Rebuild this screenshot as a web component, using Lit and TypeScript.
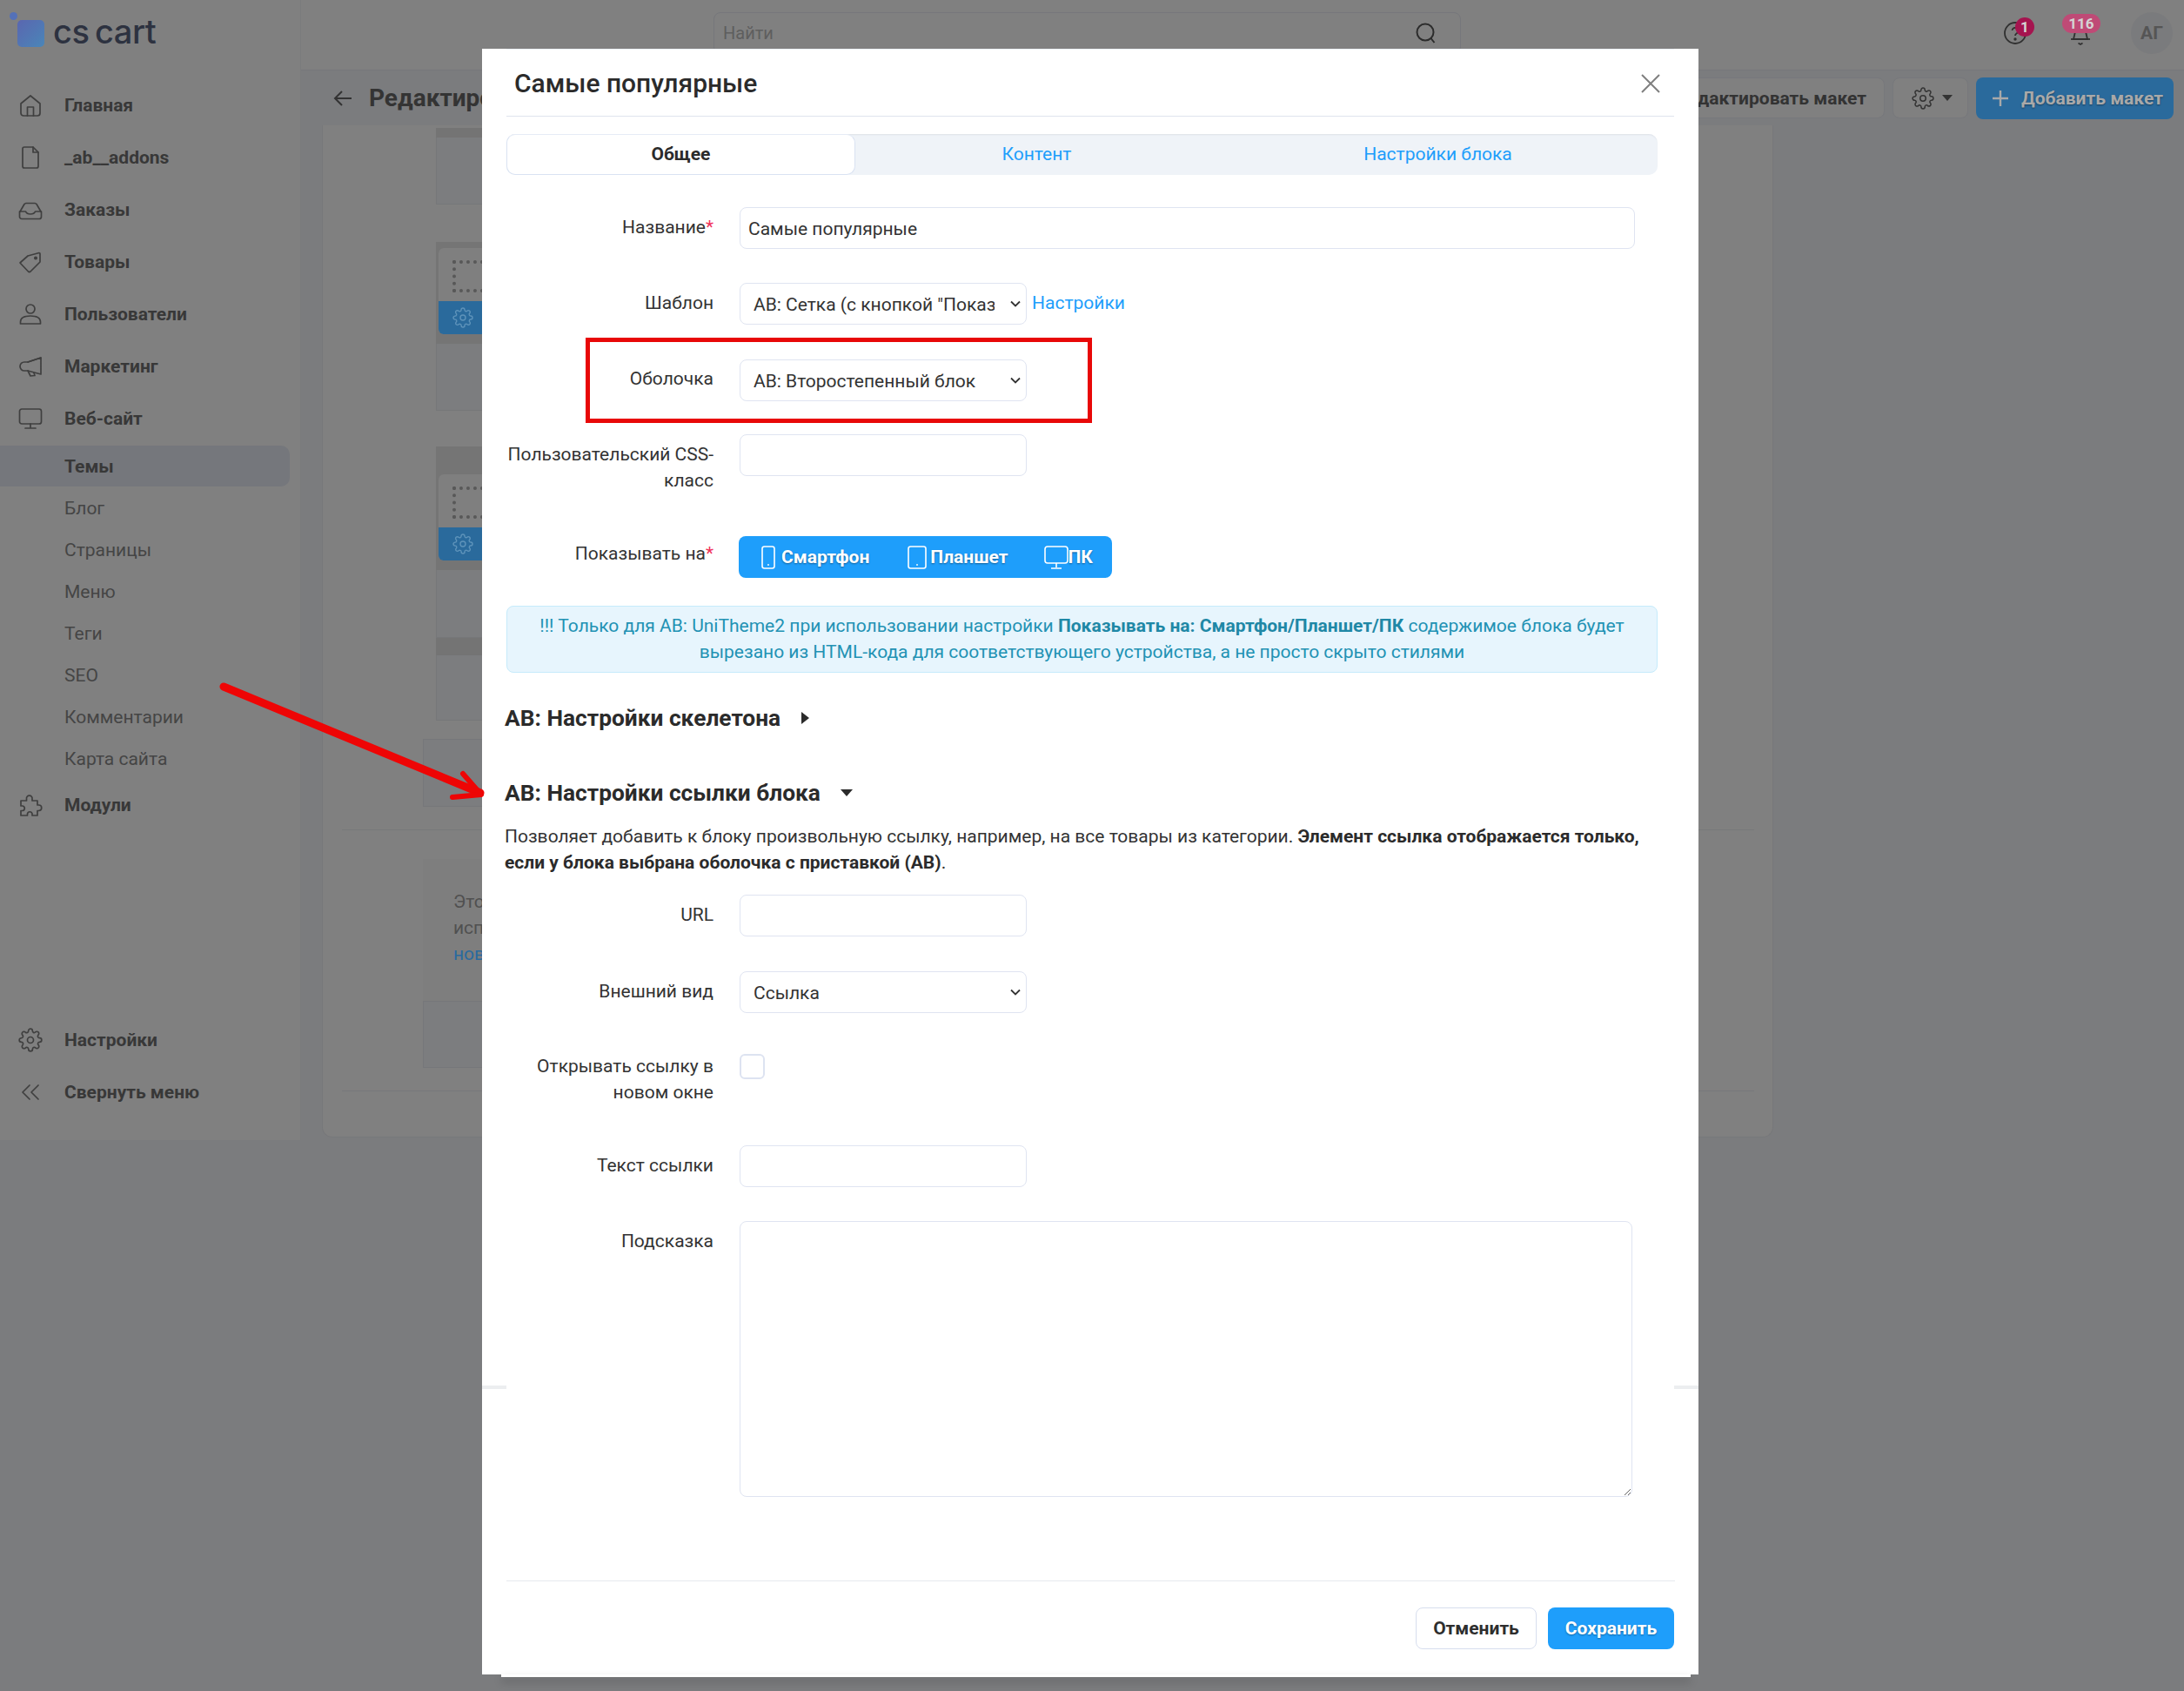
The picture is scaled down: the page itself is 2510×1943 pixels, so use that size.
import { LitElement, html, css, svg } from 'lit';
import { customElement } from 'lit/decorators.js';

const GEAR = svg`<circle cx="12" cy="12" r="3"></circle><path d="M19.4 15a1.65 1.65 0 0 0 .33 1.82l.06.06a2 2 0 0 1 0 2.83 2 2 0 0 1-2.83 0l-.06-.06a1.65 1.65 0 0 0-1.82-.33 1.65 1.65 0 0 0-1 1.51V21a2 2 0 0 1-2 2 2 2 0 0 1-2-2v-.09A1.65 1.65 0 0 0 9 19.4a1.65 1.65 0 0 0-1.82.33l-.06.06a2 2 0 0 1-2.83 0 2 2 0 0 1 0-2.83l.06-.06a1.65 1.65 0 0 0 .33-1.82 1.65 1.65 0 0 0-1.51-1H3a2 2 0 0 1-2-2 2 2 0 0 1 2-2h.09A1.65 1.65 0 0 0 4.6 9a1.65 1.65 0 0 0-.33-1.82l-.06-.06a2 2 0 0 1 0-2.83 2 2 0 0 1 2.83 0l.06.06a1.65 1.65 0 0 0 1.82.33H9a1.65 1.65 0 0 0 1-1.51V3a2 2 0 0 1 2-2 2 2 0 0 1 2 2v.09a1.65 1.65 0 0 0 1 1.51 1.65 1.65 0 0 0 1.82-.33l.06-.06a2 2 0 0 1 2.83 0 2 2 0 0 1 0 2.83l-.06.06a1.65 1.65 0 0 0-.33 1.82V9a1.65 1.65 0 0 0 1.51 1H21a2 2 0 0 1 2 2 2 2 0 0 1-2 2h-.09a1.65 1.65 0 0 0-1.51 1z"></path>`;

const gearIcon = (cls: string) =>
  html`<svg class=${cls} viewBox="0 0 24 24" fill="none" stroke="currentColor" stroke-width="1.4">${GEAR}</svg>`;

const navIcon = (d: unknown) =>
  html`<svg class="nav-icon" viewBox="0 0 28 28" fill="none" stroke="currentColor" stroke-width="1.7" stroke-linejoin="round" stroke-linecap="round">${d}</svg>`;

const ICONS = {
  home: svg`<path d="M3 12 14 3l11 9v11a3 3 0 0 1-3 3H6a3 3 0 0 1-3-3Z"></path><path d="M10.5 26V16h7v10"></path>`,
  file: svg`<path d="M7 2h10l6 6v16a2 2 0 0 1-2 2H7a2 2 0 0 1-2-2V4a2 2 0 0 1 2-2Z"></path><path d="M17 2v6h6"></path>`,
  inbox: svg`<path d="M1.5 17 7 7.500a3 3 0 0 1 2-1h10a3 3 0 0 1 2 1L26.500 17v5a2.500 2.500 0 0 1-2.500 2.500H4A2.500 2.500 0 0 1 1.500 22Z"></path><path d="M1.500 16h7c1.500 4 9.500 4 11 0h7"></path>`,
  tag: svg`<path d="M2 15 11 7l13-3.500a1 1 0 0 1 1 1V14L14 25a2 2 0 0 1-2.500 0Z"></path><circle cx="20" cy="9.500" r="1.200" fill="currentColor"></circle>`,
  user: svg`<circle cx="14" cy="8" r="5"></circle><path d="M2.500 25v-2c0-5 5.500-7 11.500-7s11.500 2 11.500 7v2Z"></path>`,
  mega: svg`<path d="M26 4v19L11 19H7a5 5 0 0 1 0-10h4Z"></path><path d="M11 19l3 6 5-.5-1-3"></path><path d="M26 4 11 9"></path>`,
  monitor: svg`<rect x="1.500" y="3" width="25" height="17" rx="2.500"></rect><path d="M14 20v4M8 25h12"></path>`,
  puzzle: svg`<path d="M3 9h6.500V7a3.300 3.300 0 1 1 6.500 0v2h6v5h1.500a3.200 3.200 0 1 1 0 6.500H22V26h-6v-2a2.800 2.800 0 0 0-5.500 0v2H3v-5.500h2a2.800 2.800 0 0 0 0-5.500H3Z"></path>`,
  gear: svg`<g transform="scale(1.1667)" stroke-width="1.450">${GEAR}</g>`,
  collapse: svg`<path d="M13 6 5 14l8 8M23 6l-8 8 8 8"></path>`,
};

const phone = html`<svg class="dev" viewBox="0 0 16 27" fill="none" stroke="currentColor" stroke-width="1.600"><rect x="1" y="1" width="14" height="25" rx="2.500"></rect><circle cx="8" cy="22" r="0.900" fill="currentColor" stroke="none"></circle></svg>`;
const tablet = html`<svg class="dev tablet" viewBox="0 0 22 27" fill="none" stroke="currentColor" stroke-width="1.600"><rect x="1" y="1" width="20" height="25" rx="2.500"></rect><circle cx="11" cy="22" r="0.900" fill="currentColor" stroke="none"></circle></svg>`;
const desktop = html`<svg class="dev desk" viewBox="0 0 28 27" fill="none" stroke="currentColor" stroke-width="1.600"><rect x="1" y="1" width="26" height="19" rx="3"></rect><path d="M14 20v5M8 26h12"></path></svg>`;

const NAV_TOP = [
  ['Главная', ICONS.home],
  ['_ab__addons', ICONS.file],
  ['Заказы', ICONS.inbox],
  ['Товары', ICONS.tag],
  ['Пользователи', ICONS.user],
  ['Маркетинг', ICONS.mega],
  ['Веб-сайт', ICONS.monitor],
] as const;

const NAV_SUB = ['Блог', 'Страницы', 'Меню', 'Теги', 'SEO', 'Комментарии', 'Карта сайта'];

const selectBox = (value: string) => html`
  <span class="sel">
    <select><option>${value}</option></select>
    <svg viewBox="0 0 12 8" fill="none" stroke="currentColor" stroke-width="1.800"><path d="M1 1.500 6 6.500 11 1.500"></path></svg>
  </span>
`;

@customElement('app-root')
export class AppRoot extends LitElement {
  static override styles = css`
    :host {
      display: block;
      width: 2510px;
      height: 1943px;
      font: 21px/30px Roboto, 'Liberation Sans', sans-serif;
    }
    * {
      box-sizing: border-box;
    }
    .page {
      position: relative;
      display: flex;
      width: 2510px;
      height: 1943px;
      overflow: hidden;
      background: #7b7c7e;
      color: #3a3a3a;
    }

    /* sidebar */
    .sidebar {
      display: flex;
      flex-direction: column;
      flex: none;
      width: 346px;
      height: 1310px;
      padding-bottom: 25px;
      background: #808080;
      border-right: 1px solid #7a7b7d;
    }
    .logo {
      display: flex;
      align-items: flex-start;
      height: 91px;
      padding: 14px 0 0 11px;
    }
    .logo-mark {
      position: relative;
      flex: none;
      width: 40px;
      height: 40px;
    }
    .logo-dot {
      position: absolute;
      left: 0;
      top: 0;
      width: 9px;
      height: 9px;
      border-radius: 50%;
      background: #5471b8;
    }
    .logo-square {
      position: absolute;
      left: 9px;
      top: 9px;
      width: 31px;
      height: 31px;
      border-radius: 5px;
      background: linear-gradient(135deg, #5a66b0, #4a86b8);
    }
    .logo-text {
      margin-left: 10px;
      font: 500 38px/44px Inter, Roboto, sans-serif;
      letter-spacing: -0.5px;
      color: #2d3240;
      word-spacing: -3px;
    }
    .nav-item {
      display: flex;
      align-items: center;
      height: 60px;
      padding-left: 21px;
      font-weight: 700;
      color: #383838;
    }
    .nav-icon {
      flex: none;
      width: 28px;
      height: 28px;
      margin-right: 25px;
      color: #3f3f3f;
    }
    .nav-sub {
      display: flex;
      align-items: center;
      height: 48px;
      padding: 1px 0 0 74px;
      color: #454545;
    }
    .nav-sub.current {
      width: 333px;
      height: 47px;
      margin: 1px 0 0;
      padding-top: 0;
      border-radius: 0 10px 10px 0;
      background: #75777c;
      font-weight: 700;
      color: #383838;
    }
    .nav-bottom {
      margin-top: auto;
    }

    /* main behind the dialog */
    .main {
      flex: 1;
      min-width: 0;
    }
    .topbar {
      display: flex;
      align-items: center;
      height: 81px;
      padding: 0 13px 5px 474px;
      background: #808080;
      border-bottom: 1px solid #76777b;
    }
    .search {
      display: flex;
      align-items: center;
      justify-content: space-between;
      width: 859px;
      height: 48px;
      padding: 0 26px 0 10px;
      border: 1px solid #76777b;
      border-radius: 8px;
      font-size: 20px;
      color: #5e5e5e;
    }
    .search svg {
      width: 26px;
      height: 26px;
      color: #2c2c2c;
    }
    .top-icon {
      position: relative;
      flex: none;
      width: 28px;
      height: 28px;
      color: #303030;
    }
    .top-icon svg {
      display: block;
      width: 28px;
      height: 28px;
    }
    .help {
      margin-left: auto;
    }
    .bell {
      margin-left: 47px;
      margin-top: 16px;
    }
    .badge {
      position: absolute;
      display: flex;
      align-items: center;
      justify-content: center;
      height: 22px;
      border-radius: 11px;
      font-size: 17px;
      font-weight: 700;
      line-height: 22px;
      color: #d4d4d4;
    }
    .badge.one {
      left: 14px;
      top: -4px;
      width: 22px;
      background: #a5144f;
    }
    .badge.many {
      left: -7px;
      top: -16px;
      width: 44px;
      background: #bf4a76;
    }
    .avatar {
      display: flex;
      align-items: center;
      justify-content: center;
      flex: none;
      width: 48px;
      height: 48px;
      margin-left: 44px;
      border-radius: 50%;
      background: #7a7b7d;
      font-weight: 700;
      color: #555;
    }
    .toolbar {
      display: flex;
      align-items: center;
      height: 63px;
      padding: 0 12px 0 37px;
    }
    .back {
      flex: none;
      width: 22px;
      height: 22px;
      margin-right: 19px;
      color: #333;
    }
    .page-title {
      width: 130px;
      overflow: hidden;
      white-space: nowrap;
      font-size: 28px;
      font-weight: 700;
      color: #343434;
    }
    .tool-btn {
      display: flex;
      align-items: center;
      height: 47px;
      border: 1px solid #77787c;
      border-radius: 8px;
      background: #808080;
      font-weight: 700;
      color: #333;
    }
    .edit {
      margin-left: auto;
      padding: 0 20px;
    }
    .gear-btn {
      width: 87px;
      margin-left: 9px;
      padding-left: 21px;
    }
    .gear-btn svg {
      width: 26px;
      height: 26px;
    }
    .gear-btn i {
      margin-left: 9px;
      border: 6px solid transparent;
      border-top: 7px solid #333;
      border-bottom: 0;
    }
    .add {
      width: 227px;
      height: 48px;
      margin-left: 9px;
      padding-left: 18px;
      border: 0;
      background: #2a6a9c;
      color: #a9a9a9;
      text-shadow: 0 1px 2px rgba(0, 0, 0, 0.4);
    }
    .add svg {
      width: 20px;
      height: 20px;
      margin-right: 14px;
    }
    .card {
      width: 1668px;
      height: 1163px;
      margin-left: 24px;
      border: 1px solid #77787a;
      border-top: 0;
      border-radius: 0 0 12px 12px;
      background: #808080;
      overflow: hidden;
    }
    .grid {
      width: 1400px;
      margin: 3px 0 0 130px;
    }
    .strip {
      background: #747474;
    }
    .cell {
      border-left: 1px solid #767779;
      border-bottom: 1px solid #767779;
      background: #7c7d7f;
    }
    .band {
      padding-left: 3px;
      background: #757575;
    }
    .widget {
      width: 300px;
      height: 99px;
      border-radius: 6px;
      background: #7f7f7f;
      overflow: hidden;
    }
    .widget-body {
      height: 61px;
      padding: 14px 0 0 16px;
    }
    .dots {
      height: 37px;
      border: 4px dotted #585858;
    }
    .widget-foot {
      display: flex;
      align-items: center;
      height: 38px;
      padding-left: 16px;
      background: #2a6a9c;
      color: #5e93ba;
    }
    .widget-foot svg {
      width: 24px;
      height: 24px;
    }
    .box {
      width: 1400px;
      margin-left: 115px;
      border: 1px solid #76777a;
      background: #7c7d7f;
    }
    .rule {
      width: 1623px;
      margin-left: 22px;
      height: 1px;
      background: #77787a;
    }
    .info {
      width: 1400px;
      margin-left: 115px;
      height: 163px;
      padding: 34px 0 0 35px;
      background: #7e7e7e;
      color: #505050;
      white-space: nowrap;
    }
    .info a {
      color: #296a9f;
    }

    /* dialog */
    .modal {
      position: absolute;
      left: 554px;
      top: 56px;
      width: 1398px;
      height: 1868px;
      padding: 0 28px;
      background: #fff;
      color: #333;
    }
    .modal::after {
      content: '';
      position: absolute;
      left: 22px;
      right: 9px;
      bottom: -3px;
      height: 3px;
      background: #fff;
      box-shadow: 0 5px 10px rgba(0, 0, 0, 0.3);
    }
    .slider-mark {
      position: absolute;
      top: 1536px;
      width: 28px;
      height: 4px;
      background: #eceef0;
    }
    .slider-mark.l {
      left: 0;
    }
    .slider-mark.r {
      right: 0;
    }
    .modal-head {
      display: flex;
      align-items: center;
      justify-content: space-between;
      height: 78px;
      padding: 2px 15px 0 9px;
      border-top: 1px solid #eef2f9;
      border-bottom: 1px solid #dfe4ee;
    }
    .modal-title {
      font-size: 30px;
      font-weight: 500;
      line-height: 36px;
      color: #2b2b2b;
    }
    .close {
      width: 24px;
      height: 24px;
      color: #7f7f7f;
    }
    .tabs {
      display: grid;
      grid-template-columns: 401px 417px 505px;
      width: 1323px;
      height: 47px;
      margin: 20px 0 37px;
      border-radius: 10px;
      background: #eff3f8;
      box-shadow: inset 0 2px 2px -1px #dde1e7;
    }
    .tab {
      display: flex;
      align-items: center;
      justify-content: center;
      padding-bottom: 2px;
      color: #1e9efb;
    }
    .tab.active {
      border: 1px solid #d9e2f2;
      border-top-color: #e6ecf6;
      border-radius: 10px;
      background: #fff;
      font-weight: 700;
      color: #2b2b2b;
    }
    .row {
      display: flex;
      align-items: flex-start;
    }
    .label {
      flex: none;
      width: 238px;
      margin-right: 30px;
      padding-top: 8px;
      text-align: right;
      color: #333;
    }
    .label.up1 {
      padding-top: 7px;
    }
    .label.up3 {
      padding-top: 5px;
    }
    .label b {
      font-weight: 400;
      color: #f0325a;
    }
    .mb38 { margin-bottom: 38px; }
    .mb39 { margin-bottom: 39px; }
    .mb40 { margin-bottom: 40px; }
    .mb46 { margin-bottom: 46px; }
    .mb49 { margin-bottom: 49px; }
    input,
    select,
    textarea {
      height: 48px;
      margin: 0;
      border: 1px solid #dfe4f1;
      border-radius: 8px;
      background: #fff;
      font: 21px/30px Roboto, 'Liberation Sans', sans-serif;
      color: #333;
      outline: 0;
    }
    input {
      padding: 2px 9px 0;
    }
    .wide {
      width: 1029px;
    }
    .narrow {
      width: 330px;
    }
    .sel {
      position: relative;
      display: block;
      flex: none;
      width: 330px;
      height: 48px;
      color: #333;
    }
    .sel select {
      appearance: none;
      display: block;
      width: 330px;
      padding: 2px 36px 0 15px;
    }
    .sel svg {
      position: absolute;
      right: 7px;
      top: 20px;
      width: 12px;
      height: 8px;
      pointer-events: none;
    }
    .link {
      margin-left: 6px;
      padding-top: 8px;
      color: #1e9efb;
    }
    .devices {
      display: flex;
      align-items: center;
      width: 429px;
      height: 48px;
      margin-left: -1px;
      padding-left: 26px;
      border-radius: 8px;
      background: #1e9efb;
      font-weight: 700;
      color: #fff;
      text-shadow: 0 1px 2px rgba(0, 0, 0, 0.4);
    }
    .dev {
      flex: none;
      width: 16px;
      height: 27px;
      margin-right: 7px;
    }
    .dev.tablet {
      width: 22px;
      margin-left: 44px;
      margin-right: 4px;
    }
    .dev.desk {
      width: 28px;
      margin-left: 41px;
      margin-right: 0;
    }
    .alert {
      width: 1323px;
      height: 77px;
      margin-top: 32px;
      padding-top: 7px;
      border: 1px solid #c6ebfb;
      border-radius: 8px;
      background: #e7f5fd;
      text-align: center;
      color: #2292b4;
    }
    .alert b {
      font-weight: 700;
      color: #1f88a6;
    }
    .section {
      display: flex;
      align-items: center;
      height: 36px;
      margin-left: -2px;
      font-size: 26.300px;
      font-weight: 700;
      color: #2b2b2b;
    }
    .caret-right {
      margin-left: 24px;
      border: 7px solid transparent;
      border-left: 9px solid #2b2b2b;
      border-right: 0;
    }
    .caret-down {
      margin-left: 23px;
      border: 7px solid transparent;
      border-top: 8px solid #2b2b2b;
      border-bottom: 0;
    }
    .s1 {
      margin-top: 34px;
    }
    .s2 {
      margin-top: 50px;
    }
    .text {
      margin: 18px 0 22px -2px;
      line-height: 29.500px;
      color: #333;
    }
    .text b {
      font-weight: 700;
      color: #2b2b2b;
    }
    .check {
      flex: none;
      width: 29px;
      height: 29px;
      margin-top: 9px;
      border: 2px solid #dde3f1;
      border-radius: 6px;
    }
    textarea {
      display: block;
      width: 1026px;
      height: 317px;
    }
    .foot-rule {
      height: 1px;
      margin-top: 96px;
      background: #e6e9ef;
      width: 1343px;
    }
    .actions {
      display: flex;
      justify-content: flex-end;
      gap: 13px;
      width: 1342px;
      margin-top: 30px;
    }
    .btn {
      display: flex;
      align-items: center;
      justify-content: center;
      height: 48px;
      border-radius: 8px;
      font-weight: 700;
    }
    .btn.cancel {
      width: 139px;
      border: 1px solid #d7deee;
      color: #2e2e2e;
    }
    .btn.save {
      width: 145px;
      background: #1e9efb;
      color: #fff;
      text-shadow: 0 1px 2px rgba(0, 0, 0, 0.35);
    }

    /* annotations */
    .red-box {
      position: absolute;
      left: 673px;
      top: 388px;
      width: 582px;
      height: 98px;
      border: 5px solid #e80808;
    }
    .arrow {
      position: absolute;
      left: 0;
      top: 0;
      width: 2510px;
      height: 1943px;
      pointer-events: none;
    }
  `;

  private renderSidebar() {
    return html`
      <aside class="sidebar">
        <div class="logo">
          <div class="logo-mark"><span class="logo-dot"></span><span class="logo-square"></span></div>
          <span class="logo-text">cs cart</span>
        </div>
        ${NAV_TOP.map(([label, icon]) => html`<div class="nav-item">${navIcon(icon)}${label}</div>`)}
        <div class="nav-sub current">Темы</div>
        ${NAV_SUB.map((label) => html`<div class="nav-sub">${label}</div>`)}
        <div class="nav-item">${navIcon(ICONS.puzzle)}Модули</div>
        <div class="nav-item nav-bottom">${navIcon(ICONS.gear)}Настройки</div>
        <div class="nav-item">${navIcon(ICONS.collapse)}Свернуть меню</div>
      </aside>
    `;
  }

  private renderWidget() {
    return html`
      <div class="widget">
        <div class="widget-body"><div class="dots"></div></div>
        <div class="widget-foot">${gearIcon('')}</div>
      </div>
    `;
  }

  private renderMain() {
    return html`
      <div class="main">
        <div class="topbar">
          <div class="search">
            <span>Найти</span>
            <svg viewBox="0 0 26 26" fill="none" stroke="currentColor" stroke-width="2"><circle cx="12" cy="12" r="9.500"></circle><path d="M18.500 19l4 5"></path></svg>
          </div>
          <div class="top-icon help">
            <svg viewBox="0 0 28 28" fill="none" stroke="currentColor" stroke-width="1.800"><circle cx="14" cy="14" r="12"></circle><path d="M10.500 11a3.500 3.500 0 1 1 5 3.500c-1 .6-1.500 1.200-1.500 2.500"></path><circle cx="14" cy="21" r="0.800" fill="currentColor"></circle></svg>
            <span class="badge one">1</span>
          </div>
          <div class="top-icon bell">
            <svg viewBox="0 0 28 28" fill="none" stroke="currentColor" stroke-width="1.800"><path d="M9 0 6 13h16L19 0"></path><path d="M3 13h22"></path><path d="M11.500 17.500 14 19l2.500-1.500"></path></svg>
            <span class="badge many">116</span>
          </div>
          <div class="avatar">АГ</div>
        </div>
        <div class="toolbar">
          <svg class="back" viewBox="0 0 22 22" fill="none" stroke="currentColor" stroke-width="2"><path d="M21 11H2M10 3l-8 8 8 8"></path></svg>
          <span class="page-title">Редактирование макета</span>
          <div class="tool-btn edit">Редактировать макет</div>
          <div class="tool-btn gear-btn">${gearIcon('')}<i></i></div>
          <div class="tool-btn add">
            <svg viewBox="0 0 20 20" fill="none" stroke="currentColor" stroke-width="2.400"><path d="M10 1v18M1 10h18"></path></svg>
            Добавить макет
          </div>
        </div>
        <div class="card">
          <div class="grid">
            <div class="strip" style="height:11px"></div>
            <div class="cell" style="height:77px"></div>
            <div style="height:43px"></div>
            <div class="band" style="height:117px;padding-top:7px">${this.renderWidget()}</div>
            <div class="cell" style="height:77px"></div>
            <div style="height:41px"></div>
            <div class="band" style="height:142px;padding-top:32px">${this.renderWidget()}</div>
            <div class="cell" style="height:78px"></div>
            <div class="strip" style="height:20px"></div>
            <div class="cell" style="height:75px"></div>
          </div>
          <div class="box" style="height:78px;margin-top:21px"></div>
          <div class="rule" style="margin-top:26px"></div>
          <div class="info" style="margin-top:33px">Это<br />исп<br /><a>нов</a></div>
          <div class="box" style="height:77px"></div>
          <div class="rule" style="margin-top:26px"></div>
        </div>
      </div>
    `;
  }

  private renderModal() {
    return html`
      <section class="modal">
        <span class="slider-mark l"></span>
        <span class="slider-mark r"></span>
        <header class="modal-head">
          <span class="modal-title">Самые популярные</span>
          <svg class="close" viewBox="0 0 24 24" fill="none" stroke="currentColor" stroke-width="2"><path d="M2 2l20 20M22 2 2 22"></path></svg>
        </header>
        <div class="tabs">
          <div class="tab active">Общее</div>
          <div class="tab">Контент</div>
          <div class="tab">Настройки блока</div>
        </div>

        <div class="row mb39">
          <div class="label">Название<b>*</b></div>
          <input class="wide" .value=${'Самые популярные'} />
        </div>
        <div class="row mb40">
          <div class="label">Шаблон</div>
          ${selectBox('AB: Сетка (с кнопкой "Показать ещё")')}
          <span class="link">Настройки</span>
        </div>
        <div class="row mb38">
          <div class="label up1">Оболочка</div>
          ${selectBox('AB: Второстепенный блок')}
        </div>
        <div class="row mb49">
          <div class="label">Пользовательский CSS-класс</div>
          <input class="narrow" />
        </div>
        <div class="row">
          <div class="label up3">Показывать на<b>*</b></div>
          <div class="devices">
            ${phone}<span>Смартфон</span>${tablet}<span>Планшет</span>${desktop}<span>ПК</span>
          </div>
        </div>
        <div class="alert">
          !!! Только для AB: UniTheme2 при использовании настройки <b>Показывать на: Смартфон/Планшет/ПК</b> содержимое блока будет<br />
          вырезано из HTML-кода для соответствующего устройства, а не просто скрыто стилями
        </div>

        <div class="section s1">AB: Настройки скелетона<i class="caret-right"></i></div>
        <div class="section s2">AB: Настройки ссылки блока<i class="caret-down"></i></div>
        <p class="text">
          Позволяет добавить к блоку произвольную ссылку, например, на все товары из категории. <b>Элемент ссылка отображается только,<br />
          если у блока выбрана оболочка с приставкой (AB)</b>.
        </p>

        <div class="row mb40">
          <div class="label">URL</div>
          <input class="narrow" />
        </div>
        <div class="row mb38">
          <div class="label">Внешний вид</div>
          ${selectBox('Ссылка')}
        </div>
        <div class="row mb46">
          <div class="label">Открывать ссылку в новом окне</div>
          <div class="check"></div>
        </div>
        <div class="row mb39">
          <div class="label">Текст ссылки</div>
          <input class="narrow" />
        </div>
        <div class="row">
          <div class="label">Подсказка</div>
          <textarea></textarea>
        </div>

        <div class="foot-rule"></div>
        <div class="actions">
          <div class="btn cancel">Отменить</div>
          <div class="btn save">Сохранить</div>
        </div>
      </section>
    `;
  }

  override render() {
    return html`
      <div class="page">
        ${this.renderSidebar()} ${this.renderMain()} ${this.renderModal()}
        <div class="red-box"></div>
        <svg class="arrow" viewBox="0 0 2510 1943" fill="none" stroke="#ee0505" stroke-linecap="round" stroke-linejoin="round">
          <path d="M257 789 552 911" stroke-width="9"></path>
          <path d="M532 889 553 913 520 916" stroke-width="6"></path>
        </svg>
      </div>
    `;
  }
}
